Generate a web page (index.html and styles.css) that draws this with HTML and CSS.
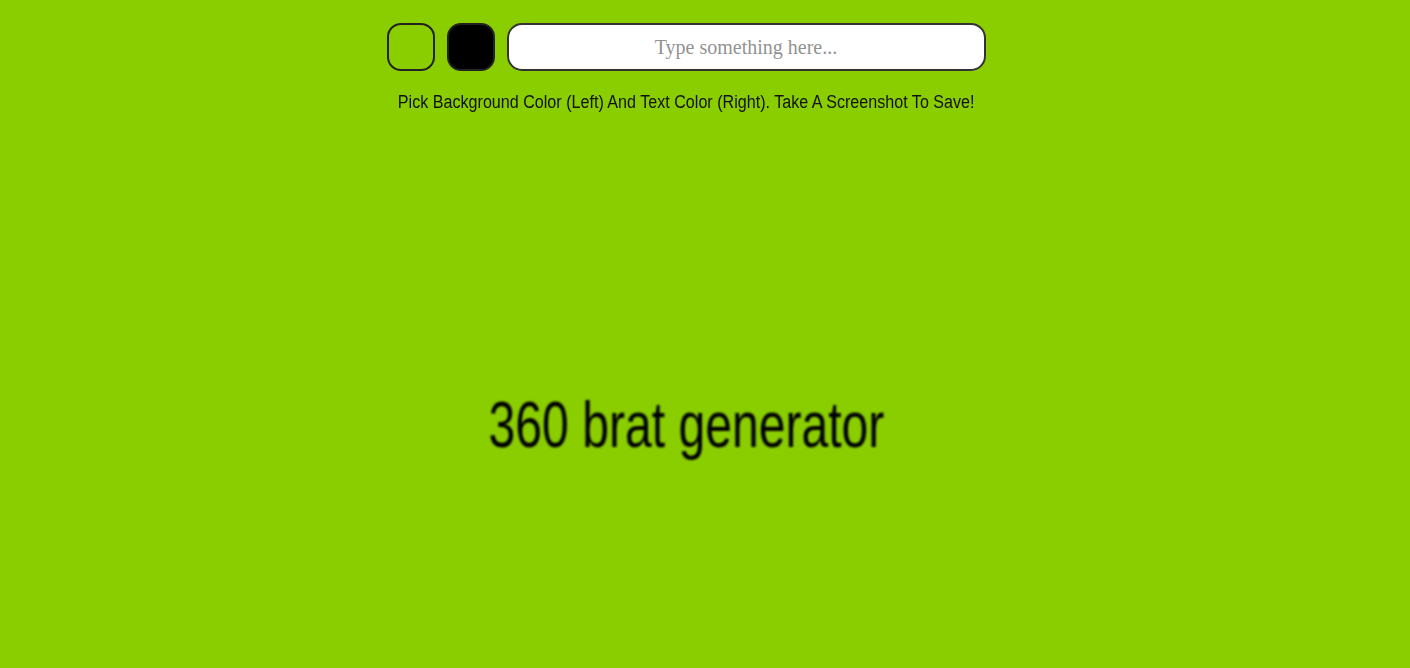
FILE: index.html
```html
<!DOCTYPE html>
<html lang="en">
<head>
<meta charset="utf-8">
<title>brat generator</title>
<link rel="stylesheet" href="styles.css">
</head>
<body>
<div class="page">
  <div class="controls">
    <div class="swatch swatch-bg"></div>
    <div class="swatch swatch-text"></div>
    <input class="text-input" type="text" placeholder="Type something here...">
  </div>
  <p class="hint">Pick Background Color (Left) And Text Color (Right). Take A Screenshot To Save!</p>
  <div class="stage">
    <div class="brat">360 brat generator</div>
  </div>
</div>
</body>
</html>
```
FILE: styles.css
```css
html, body {
  margin: 0;
  padding: 0;
  background: #8ace00;
  height: 100%;
  overflow: hidden;
}
.page {
  box-sizing: border-box;
  width: 1372px;
  padding-top: 23px;
  display: flex;
  flex-direction: column;
  align-items: center;
}
.controls {
  display: flex;
  gap: 12px;
  align-items: center;
}
.swatch {
  box-sizing: border-box;
  width: 48px;
  height: 48px;
  border: 2px solid #222;
  border-radius: 14px;
}
.swatch-bg { background: #8ace00; }
.swatch-text { background: #000; }
.text-input {
  box-sizing: border-box;
  width: 479px;
  height: 48px;
  border: 2px solid #333;
  border-radius: 15px;
  background: #fff;
  text-align: center;
  font-family: "Liberation Serif", serif;
  font-size: 20px;
  outline: none;
  padding: 0 10px;
}
.text-input::placeholder { color: #929292; }
.hint {
  margin: 20px 0 0;
  font-family: "Liberation Sans", Arial, sans-serif;
  font-size: 18px;
  line-height: 22px;
  color: #111;
  transform: scaleX(0.895);
  white-space: nowrap;
}
.stage {
  margin-top: 272px;
  display: flex;
  justify-content: center;
}
.brat {
  font-family: "Liberation Sans", Arial, sans-serif;
  font-size: 65px;
  line-height: 80px;
  color: #000;
  transform: scaleX(0.74);
  filter: blur(1.3px);
  white-space: nowrap;
}
```
